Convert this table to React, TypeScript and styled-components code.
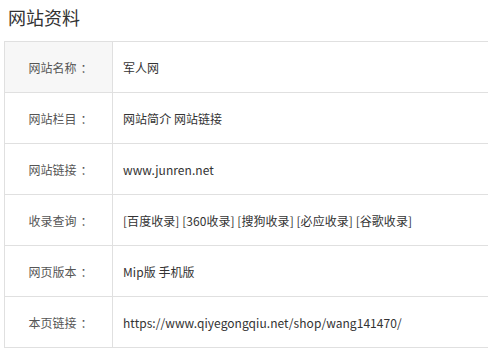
import React from "react";
import styled, { createGlobalStyle } from "styled-components";

const Global = createGlobalStyle`
  html, body { margin: 0; padding: 0; background: #fff; overflow: hidden; }
  body { font-family: "Microsoft YaHei", "Noto Sans CJK SC", "Liberation Sans", sans-serif; }
`;

const Page = styled.div`
  width: 488px;
  height: 355px;
  overflow: hidden;
`;

const Title = styled.h3`
  margin: 0;
  padding: 5px 0 0 8px;
  height: 36px;
  font-size: 18px;
  line-height: 24px;
  font-weight: normal;
  color: #333;
`;

const Table = styled.div`
  margin-left: 4px;
  width: 520px;
  display: grid;
  grid-template-columns: 108px 1fr;
  border-top: 1px solid #e0e0e0;
  border-left: 1px solid #e0e0e0;
`;

const Label = styled.div<{ $shade?: boolean }>`
  height: 50px;
  display: flex;
  align-items: center;
  justify-content: center;
  border-right: 1px solid #e0e0e0;
  border-bottom: 1px solid #e0e0e0;
  background: ${(p) => (p.$shade ? "#f7f7f7" : "#fff")};
  font-size: 12px;
  color: #555;
`;

const Colon = styled.span`
  display: inline-block;
  width: 12px;
  padding-left: 4px;
  box-sizing: border-box;
`;

const Value = styled.div`
  height: 50px;
  display: flex;
  align-items: center;
  padding-left: 10px;
  border-bottom: 1px solid #e0e0e0;
  font-size: 12px;
  color: #333;
  white-space: nowrap;
  letter-spacing: 0.05px;
`;

const rows: [string, string][] = [
  ["网站名称", "军人网"],
  ["网站栏目", "网站简介 网站链接"],
  ["网站链接", "www.junren.net"],
  ["收录查询", "[百度收录] [360收录] [搜狗收录] [必应收录] [谷歌收录]"],
  ["网页版本", "Mip版 手机版"],
  ["本页链接", "https://www.qiyegongqiu.net/shop/wang141470/"],
];

export default function App() {
  return (
    <Page>
      <Global />
      <Title>网站资料</Title>
      <Table>
        {rows.map(([l, v], i) => (
          <React.Fragment key={l}>
            <Label $shade={i === 0}>
              {l}
              <Colon>：</Colon>
            </Label>
            <Value>{v}</Value>
          </React.Fragment>
        ))}
      </Table>
    </Page>
  );
}
